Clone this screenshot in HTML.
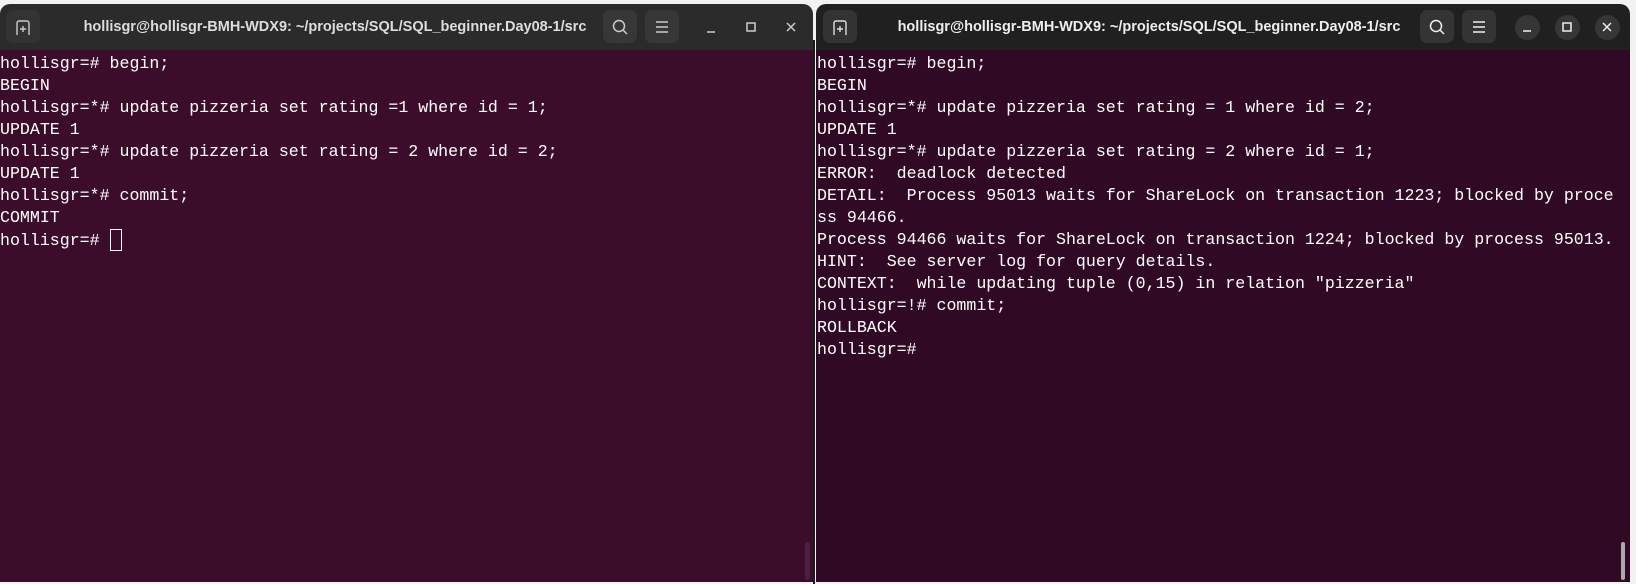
<!DOCTYPE html>
<html><head><style>
body{margin:0;width:1636px;height:584px;background:#f2f2f2;position:relative;overflow:hidden;font-family:"Liberation Sans",sans-serif}
.win{position:absolute;top:4px;height:578px;border-radius:10px 10px 0 0;overflow:hidden}
.tb{position:absolute;left:0;right:0;top:0;height:46px}
.term{position:absolute;left:0;right:0;top:46px;bottom:0;font-family:"Liberation Mono",monospace;font-size:16.6px;line-height:22px;color:#fff;white-space:pre;padding-top:3px}
.title{position:absolute;top:0;height:46px;line-height:46px;font-size:14.5px;font-weight:bold;color:#ddd;text-align:center}
.btn{position:absolute;top:6px;width:34px;height:33px;border-radius:7px;background:#373737}
.ic{position:absolute}
.circ{position:absolute;top:11px;width:25px;height:25px;border-radius:50%;background:#363636}
</style></head><body>
<div style="position:absolute;left:813px;top:40px;width:2px;height:544px;background:#1a1a1a"></div>
<div class="win" style="left:0;width:813px;border-radius:10px 10px 0 0;">
 <div class="tb" style="background:#2b2b2b">
  <div class="btn" style="left:6px;background:#333"></div>
  <svg class="ic" style="left:14px;top:14px" width="18" height="18" viewBox="0 0 18 18" fill="none" stroke="#ccc" stroke-width="1.4"><path d="M3 17V5a2 2 0 0 1 2-2h8a2 2 0 0 1 2 2v12M9 8v6M6 11h6"/></svg>
  <div class="title" style="left:70px;width:530px">hollisgr@hollisgr-BMH-WDX9: ~/projects/SQL/SQL_beginner.Day08-1/src</div>
  <div class="btn" style="left:603px"></div>
  <svg class="ic" style="left:611px;top:14px" width="18" height="18" viewBox="0 0 18 18" fill="none" stroke="#ccc" stroke-width="1.5"><circle cx="8" cy="8" r="5.5"/><path d="M12 12l4 4"/></svg>
  <div class="btn" style="left:645px"></div>
  <svg class="ic" style="left:654px;top:15px" width="16" height="16" viewBox="0 0 16 16" stroke="#ccc" stroke-width="1.4"><path d="M2 3h12M2 8h12M2 13h12"/></svg>
  <svg class="ic" style="left:703px;top:15px" width="16" height="16" viewBox="0 0 16 16" stroke="#ccc" stroke-width="1.5"><path d="M4 13h8"/></svg>
  <svg class="ic" style="left:743px;top:15px" width="16" height="16" viewBox="0 0 16 16" fill="none" stroke="#ccc" stroke-width="1.5"><rect x="4" y="4" width="8" height="8"/></svg>
  <svg class="ic" style="left:783px;top:15px" width="16" height="16" viewBox="0 0 16 16" stroke="#ccc" stroke-width="1.5"><path d="M4 4l8 8M12 4l-8 8"/></svg>
 </div>
 <div class="term" style="background:#3c0d2b">hollisgr=# begin;
BEGIN
hollisgr=*# update pizzeria set rating =1 where id = 1;
UPDATE 1
hollisgr=*# update pizzeria set rating = 2 where id = 2;
UPDATE 1
hollisgr=*# commit;
COMMIT
hollisgr=# <span style="display:inline-block;width:10px;height:20px;border:1px solid #fff;vertical-align:-6px"></span></div>
 <div style="position:absolute;left:805px;top:538px;width:5px;height:38px;border-radius:3px;background:#4a2040"></div>
</div>
<div class="win" style="left:816px;width:814px">
 <div class="tb" style="background:#202020">
  <div class="btn" style="left:7px;background:#333"></div>
  <svg class="ic" style="left:15px;top:14px" width="18" height="18" viewBox="0 0 18 18" fill="none" stroke="#ddd" stroke-width="1.4"><path d="M3 17V5a2 2 0 0 1 2-2h8a2 2 0 0 1 2 2v12M9 8v6M6 11h6"/></svg>
  <div class="title" style="left:68px;width:530px;color:#eee">hollisgr@hollisgr-BMH-WDX9: ~/projects/SQL/SQL_beginner.Day08-1/src</div>
  <div class="btn" style="left:604px;background:#343434"></div>
  <svg class="ic" style="left:612px;top:14px" width="18" height="18" viewBox="0 0 18 18" fill="none" stroke="#eee" stroke-width="1.5"><circle cx="8" cy="8" r="5.5"/><path d="M12 12l4 4"/></svg>
  <div class="btn" style="left:646px;background:#343434"></div>
  <svg class="ic" style="left:655px;top:15px" width="16" height="16" viewBox="0 0 16 16" stroke="#eee" stroke-width="1.4"><path d="M2 3h12M2 8h12M2 13h12"/></svg>
  <div class="circ" style="left:699px"></div>
  <svg class="ic" style="left:703px;top:15px" width="16" height="16" viewBox="0 0 16 16" stroke="#eee" stroke-width="1.5"><path d="M4 12h8"/></svg>
  <div class="circ" style="left:739px"></div>
  <svg class="ic" style="left:743px;top:15px" width="16" height="16" viewBox="0 0 16 16" fill="none" stroke="#eee" stroke-width="1.5"><rect x="4" y="4" width="8" height="8"/></svg>
  <div class="circ" style="left:779px"></div>
  <svg class="ic" style="left:783px;top:15px" width="16" height="16" viewBox="0 0 16 16" stroke="#eee" stroke-width="1.5"><path d="M4 4l8 8M12 4l-8 8"/></svg>
 </div>
 <div class="term" style="background:#300a24;padding-left:1px">hollisgr=# begin;
BEGIN
hollisgr=*# update pizzeria set rating = 1 where id = 2;
UPDATE 1
hollisgr=*# update pizzeria set rating = 2 where id = 1;
ERROR:  deadlock detected
DETAIL:  Process 95013 waits for ShareLock on transaction 1223; blocked by proce
ss 94466.
Process 94466 waits for ShareLock on transaction 1224; blocked by process 95013.
HINT:  See server log for query details.
CONTEXT:  while updating tuple (0,15) in relation "pizzeria"
hollisgr=!# commit;
ROLLBACK
hollisgr=# </div>
 <div style="position:absolute;left:805px;top:538px;width:4px;height:38px;border-radius:2px;background:#aaa"></div>
</div>
</body></html>
